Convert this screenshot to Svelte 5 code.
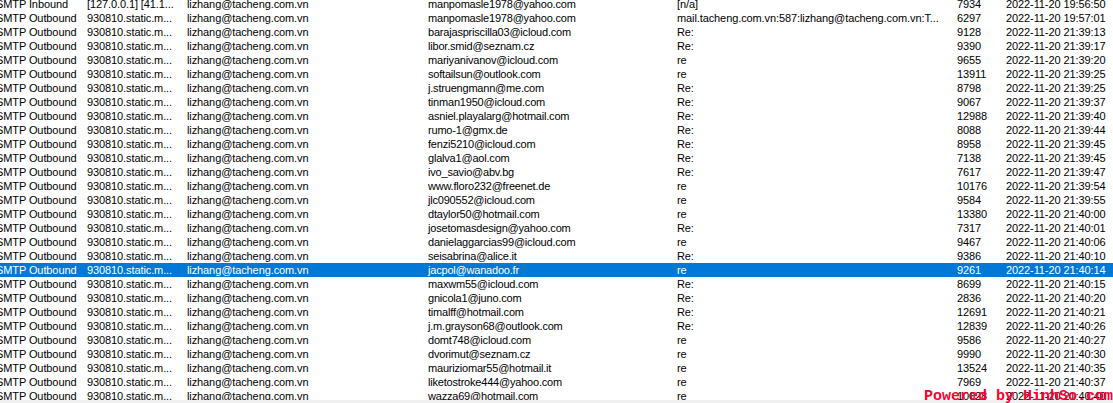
<script>
	const account = 'lizhang@tacheng.com.vn';
	const rows = [
		['SMTP Inbound', '[127.0.0.1] [41.1...', 'manpomasle1978@yahoo.com', '[n/a]', 7934, '2022-11-20 19:56:50'],
		['SMTP Outbound', '930810.static.m...', 'manpomasle1978@yahoo.com', 'mail.tacheng.com.vn:587:lizhang@tacheng.com.vn:T...', 6297, '2022-11-20 19:57:01'],
		['SMTP Outbound', '930810.static.m...', 'barajaspriscilla03@icloud.com', 'Re:', 9128, '2022-11-20 21:39:13'],
		['SMTP Outbound', '930810.static.m...', 'libor.smid@seznam.cz', 'Re:', 9390, '2022-11-20 21:39:17'],
		['SMTP Outbound', '930810.static.m...', 'mariyanivanov@icloud.com', 're', 9655, '2022-11-20 21:39:20'],
		['SMTP Outbound', '930810.static.m...', 'softailsun@outlook.com', 're', 13911, '2022-11-20 21:39:25'],
		['SMTP Outbound', '930810.static.m...', 'j.struengmann@me.com', 'Re:', 8798, '2022-11-20 21:39:25'],
		['SMTP Outbound', '930810.static.m...', 'tinman1950@icloud.com', 'Re:', 9067, '2022-11-20 21:39:37'],
		['SMTP Outbound', '930810.static.m...', 'asniel.playalarg@hotmail.com', 'Re:', 12988, '2022-11-20 21:39:40'],
		['SMTP Outbound', '930810.static.m...', 'rumo-1@gmx.de', 'Re:', 8088, '2022-11-20 21:39:44'],
		['SMTP Outbound', '930810.static.m...', 'fenzi5210@icloud.com', 'Re:', 8958, '2022-11-20 21:39:45'],
		['SMTP Outbound', '930810.static.m...', 'glalva1@aol.com', 'Re:', 7138, '2022-11-20 21:39:45'],
		['SMTP Outbound', '930810.static.m...', 'ivo_savio@abv.bg', 'Re:', 7617, '2022-11-20 21:39:47'],
		['SMTP Outbound', '930810.static.m...', 'www.floro232@freenet.de', 're', 10176, '2022-11-20 21:39:54'],
		['SMTP Outbound', '930810.static.m...', 'jlc090552@icloud.com', 're', 9584, '2022-11-20 21:39:55'],
		['SMTP Outbound', '930810.static.m...', 'dtaylor50@hotmail.com', 're', 13380, '2022-11-20 21:40:00'],
		['SMTP Outbound', '930810.static.m...', 'josetomasdesign@yahoo.com', 'Re:', 7317, '2022-11-20 21:40:01'],
		['SMTP Outbound', '930810.static.m...', 'danielaggarcias99@icloud.com', 're', 9467, '2022-11-20 21:40:06'],
		['SMTP Outbound', '930810.static.m...', 'seisabrina@alice.it', 'Re:', 9386, '2022-11-20 21:40:10'],
		['SMTP Outbound', '930810.static.m...', 'jacpol@wanadoo.fr', 're', 9261, '2022-11-20 21:40:14'],
		['SMTP Outbound', '930810.static.m...', 'maxwm55@icloud.com', 'Re:', 8699, '2022-11-20 21:40:15'],
		['SMTP Outbound', '930810.static.m...', 'gnicola1@juno.com', 'Re:', 2836, '2022-11-20 21:40:20'],
		['SMTP Outbound', '930810.static.m...', 'timalff@hotmail.com', 'Re:', 12691, '2022-11-20 21:40:21'],
		['SMTP Outbound', '930810.static.m...', 'j.m.grayson68@outlook.com', 'Re:', 12839, '2022-11-20 21:40:26'],
		['SMTP Outbound', '930810.static.m...', 'domt748@icloud.com', 're', 9586, '2022-11-20 21:40:27'],
		['SMTP Outbound', '930810.static.m...', 'dvorimut@seznam.cz', 're', 9990, '2022-11-20 21:40:30'],
		['SMTP Outbound', '930810.static.m...', 'mauriziomar55@hotmail.it', 're', 13524, '2022-11-20 21:40:35'],
		['SMTP Outbound', '930810.static.m...', 'liketostroke444@yahoo.com', 're', 7969, '2022-11-20 21:40:37'],
		['SMTP Outbound', '930810.static.m...', 'wazza69@hotmail.com', 're', 10028, '2022-11-20 21:40:40']
	];
	const selected = 19;
</script>

<div class="window">
	<div class="viewport">
		<div class="list">
			{#each rows as [type, host, to, subject, size, date], i}
				<div class="row" class:selected={i === selected}>
					<span>{type}</span>
					<span>{host}</span>
					<span>{account}</span>
					<span class="recipient">{to}</span>
					<span>{subject}</span>
					<span>{size}</span>
					<span>{date}</span>
				</div>
			{/each}
		</div>
	</div>
	<div class="scrollbar"></div>
	<div class="watermark">Powered by HinhSo.com</div>
</div>

<style>
	:global(body) {
		background: #fff;
	}

	.window {
		position: relative;
		width: 1113px;
		height: 403px;
		overflow: hidden;
		display: flex;
		flex-direction: column;
		font: 11px/14px "Liberation Sans", Arial, sans-serif;
		letter-spacing: -0.1px;
		color: #000;
	}

	.viewport {
		flex: 1;
		min-height: 0;
		overflow: hidden;
	}

	.list {
		margin: -3px 0 0;
	}

	.row {
		display: grid;
		grid-template-columns: 91px 100px 241px 249px 280px 49px 107px;
		height: 14px;
		margin-left: -4px;
		white-space: nowrap;
	}

	.row.selected {
		background: #0078d7;
		color: #fff;
	}

	.recipient {
		letter-spacing: -0.2px;
	}

	.scrollbar {
		height: 3px;
		background: #f0f0f0;
	}

	.watermark {
		position: absolute;
		right: 0;
		bottom: -2px;
		font: bold 15px/16px "Liberation Mono", monospace;
		letter-spacing: 0;
		color: #ff0033;
		white-space: nowrap;
	}
</style>
